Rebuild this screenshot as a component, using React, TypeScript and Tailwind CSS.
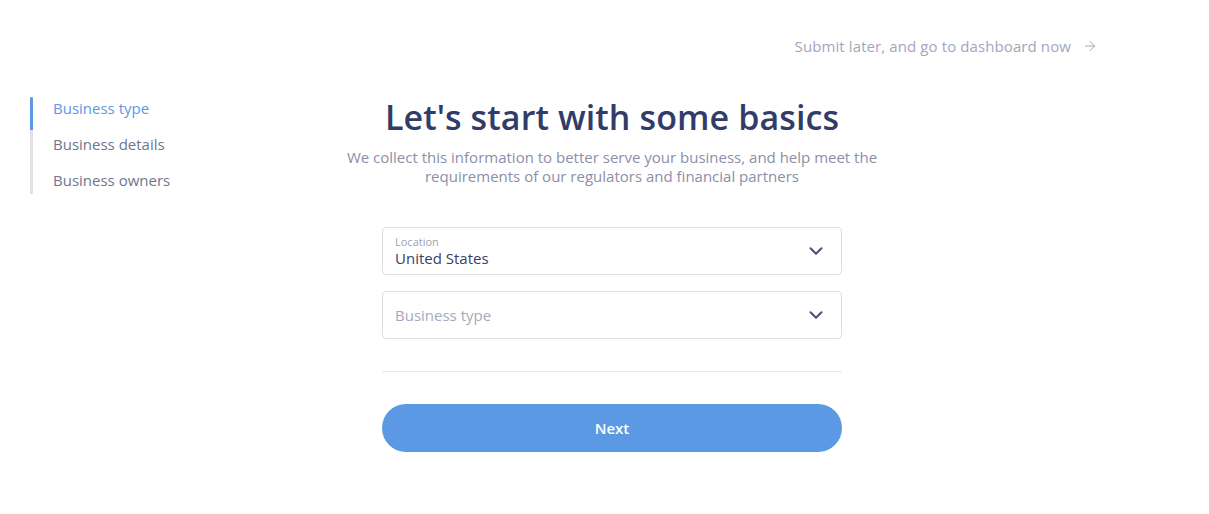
import { ChevronDown, ArrowRight } from "lucide-react";

const steps = [
  { label: "Business type", active: true },
  { label: "Business details", active: false },
  { label: "Business owners", active: false },
];

export default function App() {
  return (
    <div className="min-h-[514px] bg-white pl-[30px] pr-[15px] pt-[36px] font-['Open_Sans',sans-serif]">
      {/* Top link */}
      <div className="flex justify-end pr-[96px]">
        <a href="#" className="flex items-center gap-[11px] text-[15px] leading-[20px] tracking-[0.1px] text-[#a3a6bd]">
          Submit later, and go to dashboard now
          <ArrowRight className="h-[16px] w-[16px]" strokeWidth={1.5} />
        </a>
      </div>

      <div className="mt-[41px] grid grid-cols-[1fr_560px_1fr]">
        {/* Steps sidebar */}
        <nav className="flex flex-col gap-[14px] self-start border-l-[3px] border-[#e2e2e6] pb-[3px]">
          {steps.map((s) => (
            <div
              key={s.label}
              className={
                "relative pl-[20px] text-[15px] leading-[22px] " +
                (s.active ? "text-[#5b99e5]" : "text-[#70758f]")
              }
            >
              {s.active && <span className="absolute -left-[3px] top-0 h-[33px] w-[3px] rounded-t-[2px] bg-[#5b99e5]" />}
              {s.label}
            </div>
          ))}
        </nav>

        {/* Main form */}
        <main className="flex flex-col items-center">
          <h1 className="text-[34px] font-semibold leading-[40px] tracking-[0.1px] text-[#323c69]">Let's start with some basics</h1>
          <p className="mt-[11px] text-center text-[15px] leading-[19px] text-[#8b8fa8]">
            We collect this information to better serve your business, and help meet the
            <br />
            requirements of our regulators and financial partners
          </p>

          <div className="mt-[41px] flex w-[460px] flex-col gap-[16px]">
            <button className="flex h-[48px] items-center justify-between rounded-[4px] border border-[#dcdde3] pl-[12px] pr-[14px] text-left">
              <span className="flex flex-col">
                <span className="text-[11px] leading-[13px] text-[#9fa2b4]">Location</span>
                <span className="text-[15px] leading-[20px] text-[#3a4166]">United States</span>
              </span>
              <ChevronDown className="h-[22px] w-[22px] text-[#4a5077]" strokeWidth={2.2} />
            </button>
            <button className="flex h-[48px] items-center justify-between rounded-[4px] border border-[#dcdde3] pl-[12px] pr-[14px] text-left">
              <span className="text-[15px] text-[#a6a9bd]">Business type</span>
              <ChevronDown className="h-[22px] w-[22px] text-[#4a5077]" strokeWidth={2.2} />
            </button>
          </div>

          <div className="mt-[32px] h-px w-[460px] bg-[#e8e9ed]" />

          <button className="mt-[32px] h-[48px] w-[460px] rounded-full bg-[#5b99e5] text-[15px] font-semibold text-white">
            Next
          </button>
        </main>

        <div />
      </div>
    </div>
  );
}
